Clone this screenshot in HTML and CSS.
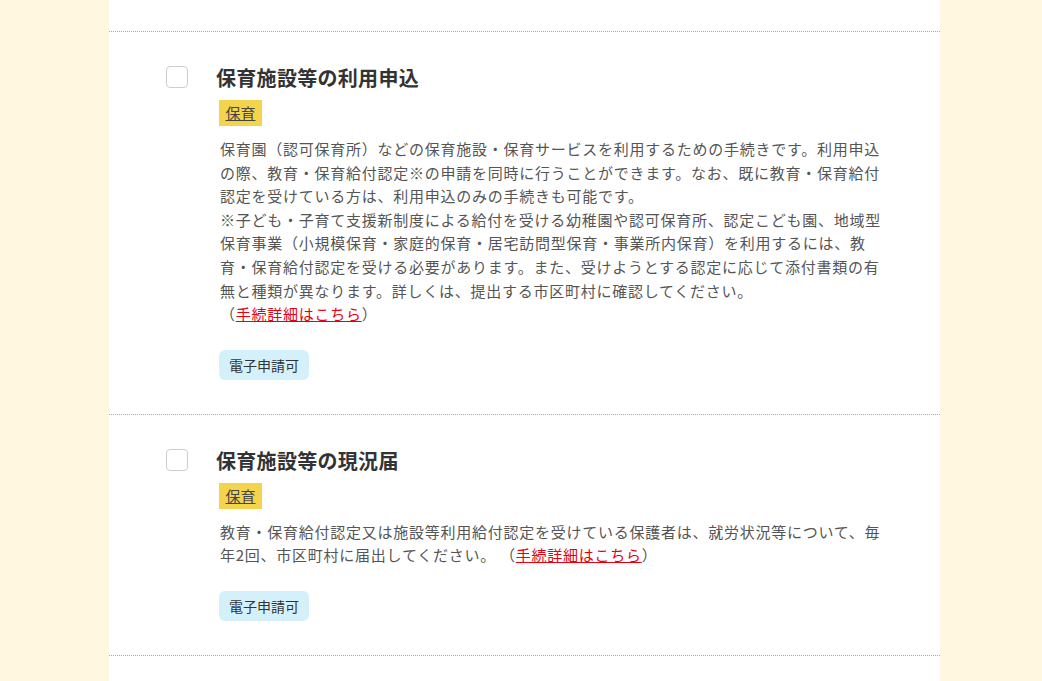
FILE: index.html
```html
<!DOCTYPE html>
<html lang="ja">
<head>
    <meta charset="UTF-8">
    <meta name="viewport" content="width=device-width, initial-scale=1.0">
    <title>手続き一覧</title>
    <link rel="stylesheet" href="styles.css">
</head>
<body>
    <div class="panel">
        <div class="item-prev"></div>

        <div class="item">
            <span class="check"></span>
            <div class="item-body">
                <h2 class="item-title">保育施設等の利用申込</h2>
                <div class="tags"><a class="tag" href="#">保育</a></div>
                <p class="item-text">保育園（認可保育所）などの保育施設・保育サービスを利用するための手続きです。利用申込の際、教育・保育給付認定※の申請を同時に行うことができます。なお、既に教育・保育給付認定を受けている方は、利用申込のみの手続きも可能です。<br>※子ども・子育て支援新制度による給付を受ける幼稚園や認可保育所、認定こども園、地域型保育事業（小規模保育・家庭的保育・居宅訪問型保育・事業所内保育）を利用するには、教育・保育給付認定を受ける必要があります。また、受けようとする認定に応じて添付書類の有無と種類が異なります。詳しくは、提出する市区町村に確認してください。<br>（<a class="detail-link" href="#">手続詳細はこちら</a>）</p>
                <div class="badges"><span class="badge">電子申請可</span></div>
            </div>
        </div>

        <div class="item">
            <span class="check"></span>
            <div class="item-body">
                <h2 class="item-title">保育施設等の現況届</h2>
                <div class="tags"><a class="tag" href="#">保育</a></div>
                <p class="item-text">教育・保育給付認定又は施設等利用給付認定を受けている保護者は、就労状況等について、毎年2回、市区町村に届出してください。 （<a class="detail-link" href="#">手続詳細はこちら</a>）</p>
                <div class="badges"><span class="badge">電子申請可</span></div>
            </div>
        </div>
    </div>
</body>
</html>
```

FILE: styles.css
```css
body {
    font-family: 'Noto Sans CJK JP', 'Liberation Sans', sans-serif;
    background-color: #fff7e0;
    margin: 0;
    height: 681px;
    overflow: hidden;
}
.panel {
    background: white;
    width: 831px;
    min-height: 100vh;
    margin: 0 102px 0 109px; /* 左右で少しずれている */
}
.item-prev {
    height: 31px;
    border-bottom: 1px dotted #aaa;
}
.item {
    display: flex;
    padding: 31px 0 34px 57px;
    border-bottom: 1px dotted #aaa;
}
.check {
    flex: none;
    width: 20px;
    height: 20px;
    margin: 3px 28px 0 0;
    border: 1px solid #c9ced6;
    border-radius: 4px;
    background: white;
}
.item-body {
    width: 672px;
}
.item-title {
    margin: 0;
    font-size: 20px;
    line-height: 30px;
    font-weight: bold;
    letter-spacing: 0.3px;
    color: #333;
}
.tags {
    display: flex;
    margin: 7px 0 0 3px;
}
.tag {
    display: block;
    padding: 0 6.5px;
    font-size: 15px;
    line-height: 26px;
    color: #444;
    background-color: #f4d44d;
    text-decoration: underline;
}
.item-text {
    width: 664px;
    margin: 11px 0 0 4px;
    font-size: 15px;
    line-height: 23.6px;
    letter-spacing: 0.05em;
    color: #555;
}
.detail-link {
    color: #e60012;
    text-decoration: underline;
}
.badges {
    display: flex;
    margin: 24px 0 0 3px;
}
.badge {
    padding: 0 10px;
    font-size: 14px;
    line-height: 30px;
    color: #333;
    background-color: #d4f1fb;
    border-radius: 6px;
}
```
